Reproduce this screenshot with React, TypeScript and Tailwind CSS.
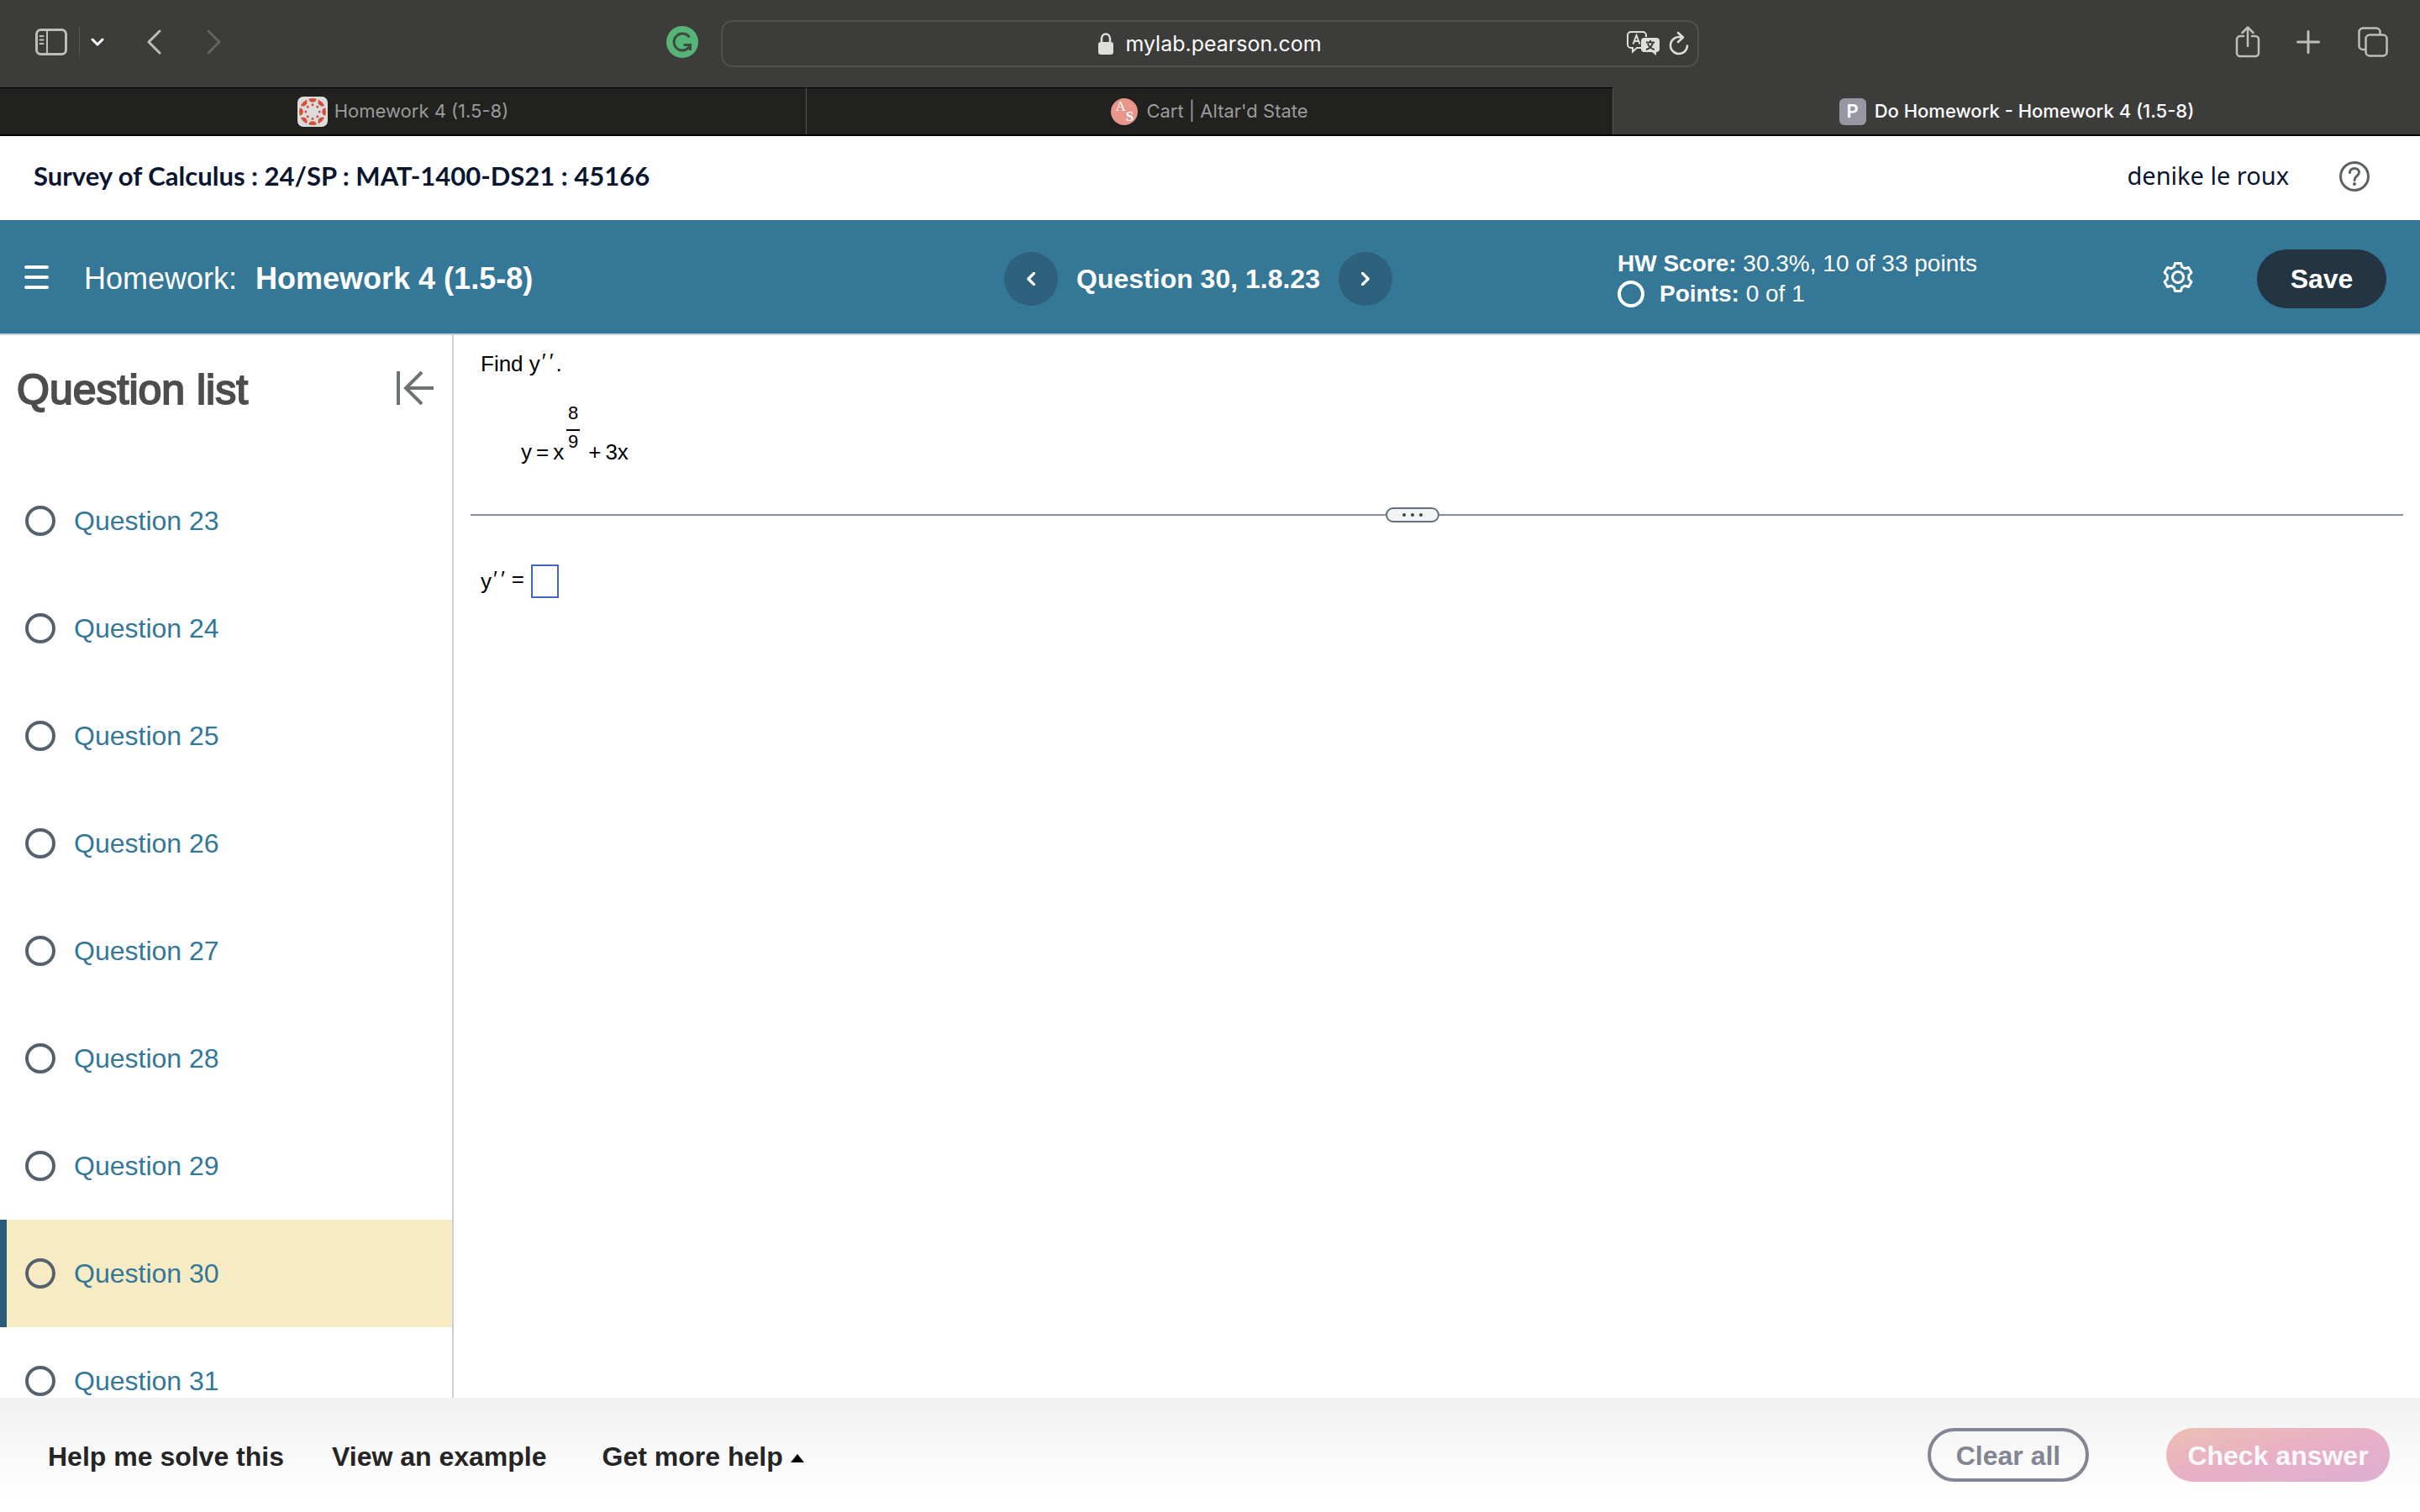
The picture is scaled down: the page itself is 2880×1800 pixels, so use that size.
import { useState } from "react";

const QUESTIONS = [23, 24, 25, 26, 27, 28, 29, 30, 31];

function SidebarIcon() {
  return (
    <svg width="38" height="32" viewBox="0 0 38 32" fill="none" stroke="currentColor" strokeWidth="3">
      <rect x="1.5" y="1.5" width="35" height="29" rx="5" />
      <path d="M14 2v28" strokeWidth="2" />
      <path d="M5.5 9h4M5.5 13.500h4M5.5 18h4" strokeWidth="2" strokeLinecap="round" />
    </svg>
  );
}

function Chevron({ left = false, className = "" }: { left?: boolean; className?: string }) {
  return (
    <svg
      className={className}
      viewBox="0 0 18 30"
      fill="none"
      stroke="currentColor"
      strokeWidth="3"
      strokeLinecap="round"
      strokeLinejoin="round"
    >
      <path d={left ? "M16 2 3 15l13 13" : "M2 2l13 13L2 28"} />
    </svg>
  );
}

function GrammarlyIcon() {
  return (
    <svg width="38" height="38" viewBox="0 0 38 38">
      <circle cx="19" cy="19" r="19" fill="#56b576" />
      <path
        d="M27.500 13.500A10 10 0 1 0 28.500 22.500H20.500M28.500 21v8"
        fill="none"
        stroke="#3c4a3f"
        strokeWidth="3"
      />
    </svg>
  );
}

function LockIcon() {
  return (
    <svg width="18" height="26" viewBox="0 0 18 26">
      <rect y="11" width="18" height="15" rx="3" fill="#dededd" />
      <path d="M4 12V7a5 5.500 0 0 1 10 0v5" fill="none" stroke="#dededd" strokeWidth="2.500" />
    </svg>
  );
}

function TranslateIcon() {
  return (
    <svg width="40" height="30" viewBox="0 0 40 30" fill="none" stroke="#dededd" strokeWidth="2">
      <path d="M17 20h-5l-5 4.500V20H5a4 4 0 0 1-4-4V5a4 4 0 0 1 4-4h14a4 4 0 0 1 4 4v2" />
      <path d="M7.500 15.500 11.500 5l4 10.500M9 12h5" />
      <path d="M21 8h14a4 4 0 0 1 4 4v9a4 4 0 0 1-4 4v4l-5-4h-9a4 4 0 0 1-4-4v-9a4 4 0 0 1 4-4z" fill="#dededd" stroke="none" />
      <path d="M23 13.500h10M28 11v2.500M31 14c-1 4-4 7-8 8M25 15c1 3 4 6 8 7" stroke="#3c3c3a" />
    </svg>
  );
}

function ReloadIcon() {
  return (
    <svg width="24" height="30" viewBox="0 0 24 30" fill="none" stroke="#dededd" strokeWidth="2.500" strokeLinecap="round">
      <path d="M15 7.500A10 10 0 1 0 22 17.500" />
      <path d="M11 2l6 5.500-6 5.500" strokeLinejoin="round" />
    </svg>
  );
}

function ShareIcon() {
  return (
    <svg width="30" height="38" viewBox="0 0 30 38" fill="none" stroke="currentColor" strokeWidth="2.500" strokeLinecap="round">
      <path d="M10 12H6a4 4 0 0 0-4 4v16a4 4 0 0 0 4 4h18a4 4 0 0 0 4-4V16a4 4 0 0 0-4-4h-4" />
      <path d="M15 24V2M8.500 8 15 1.500 21.500 8" strokeLinejoin="round" />
    </svg>
  );
}

function PlusIcon() {
  return (
    <svg width="28" height="28" viewBox="0 0 28 28" stroke="currentColor" strokeWidth="3" strokeLinecap="round">
      <path d="M14 1.500v25M1.500 14h25" />
    </svg>
  );
}

function TabsIcon() {
  return (
    <svg width="36" height="36" viewBox="0 0 36 36" fill="none" stroke="currentColor" strokeWidth="2.500">
      <rect x="9.500" y="9.500" width="25" height="25" rx="4.500" />
      <path d="M9 27H6a4.500 4.500 0 0 1-4.500-4.500V6A4.500 4.500 0 0 1 6 1.500h16A4.500 4.500 0 0 1 26.500 6v3" />
    </svg>
  );
}

function CanvasIcon() {
  const angles = [0, 45, 90, 135, 180, 225, 270, 315];
  return (
    <svg width="36" height="36" viewBox="0 0 36 36">
      <rect width="36" height="36" rx="7" fill="#dcdcdc" />
      {angles.map((angle) => (
        <g key={angle} transform={`rotate(${angle} 18 18)`} fill="#d5503b">
          <path d="M13.200 2.800a16 16 0 0 1 9.600 0a4.900 4.900 0 0 1-9.600 0z" />
          <circle cx="18" cy="9.800" r="1.500" />
        </g>
      ))}
    </svg>
  );
}

function AltarIcon() {
  return (
    <span className="flex size-8 items-center justify-center rounded-full bg-[#e8958b] font-['Liberation_Serif',serif] text-[17px] leading-4 text-white">
      <span className="pb-3">A</span>
      <span className="pt-3 font-bold">S</span>
    </span>
  );
}

function HelpIcon() {
  return (
    <svg width="36" height="36" viewBox="0 0 36 36" fill="none" stroke="#5c6260" strokeWidth="3">
      <circle cx="18" cy="18" r="16.500" />
      <path d="M12.500 13.500c0-3 2.200-5 5.500-5s5.500 2 5.500 4.700c0 4.300-5.500 4.300-5.500 9.300" strokeLinecap="round" />
      <circle cx="18" cy="27" r="2" fill="#5c6260" stroke="none" />
    </svg>
  );
}

function GearIcon() {
  return (
    <svg width="36" height="36" viewBox="0 0 36 36" fill="none" stroke="currentColor" strokeWidth="3" strokeLinejoin="round">
      <path d="M14.500 1.500h7l1.200 4.300 3.400 2 4.400-1.300 3.500 6-3.200 3.300v4.400l3.200 3.300-3.500 6-4.400-1.300-3.400 2-1.200 4.300h-7l-1.200-4.300-3.400-2-4.400 1.300-3.500-6 3.200-3.300v-4.400L2 12.500l3.500-6 4.400 1.300 3.400-2z" />
      <circle cx="18" cy="18" r="6.500" />
    </svg>
  );
}

function CollapseIcon() {
  return (
    <svg width="44" height="40" viewBox="0 0 44 40" fill="none" stroke="#6a7371" strokeWidth="4">
      <path d="M2 0v40M44 20H12M30 1 11 20l19 19" />
    </svg>
  );
}

function BrowserBar() {
  return (
    <div className="grid h-[104px] grid-cols-[1fr_1164px_1fr] items-center bg-[#3c3c3a] pb-1 text-[#bdbdbb]">
      <div className="flex items-center">
        <button aria-label="Show sidebar" className="ml-[42px]"><SidebarIcon /></button>
        <span className="ml-[14px] h-9 w-px bg-[#555553]" />
        <button aria-label="Tab groups" className="ml-[13px] text-white">
          <svg width="16" height="12" viewBox="0 0 16 12" fill="none" stroke="currentColor" strokeWidth="3" strokeLinecap="round" strokeLinejoin="round">
            <path d="M2 3l6 6 6-6" />
          </svg>
        </button>
        <button aria-label="Back" className="ml-[50px]"><Chevron left className="h-[30px] w-[18px]" /></button>
        <button aria-label="Forward" className="ml-[54px] text-[#646462]"><Chevron className="h-[30px] w-[18px]" /></button>
        <button aria-label="Grammarly" className="mr-[27px] ml-auto"><GrammarlyIcon /></button>
      </div>
      <div className="mt-1 flex h-14 items-center rounded-[14px] border-2 border-[#51514f] pr-[10px]">
        <div className="flex flex-1 items-center justify-center gap-[14px] pl-[84px] text-[25px] text-white">
          <LockIcon />
          <span className="pt-[2px]">mylab.pearson.com</span>
        </div>
        <button aria-label="Translate"><TranslateIcon /></button>
        <button aria-label="Reload" className="ml-[10px]"><ReloadIcon /></button>
      </div>
      <div className="flex items-center justify-end pr-[38px]">
        <button aria-label="Share"><ShareIcon /></button>
        <button aria-label="New tab" className="ml-[43px]"><PlusIcon /></button>
        <button aria-label="Tab overview" className="ml-[45px]"><TabsIcon /></button>
      </div>
    </div>
  );
}

function BrowserTabs() {
  return (
    <div className="grid h-[58px] grid-cols-3 border-b-2 border-black bg-[#212120] text-[22px] text-[#9b9b99]">
      <button className="flex items-center justify-center gap-2 border-t border-r border-t-black border-r-[#555553]">
        <CanvasIcon />
        Homework 4 (1.5-8)
      </button>
      <button className="flex items-center justify-center gap-[10px] border-t border-r border-t-black border-r-[#555553]">
        <AltarIcon />
        Cart | Altar'd State
      </button>
      <button className="flex items-center justify-center gap-[10px] bg-[#3c3c3a] pt-px font-medium text-white">
        <span className="flex size-8 items-center justify-center rounded-md bg-[#9796a3] font-semibold">P</span>
        Do Homework - Homework 4 (1.5-8)
      </button>
    </div>
  );
}

function CourseHeader() {
  return (
    <header className="flex h-[100px] items-center justify-between pr-[60px] pb-1 pl-10 text-[#0a1530]">
      <h1 className="pb-[2px] font-['Lato'] text-[31px] font-bold">Survey of Calculus : 24/SP : MAT-1400-DS21 : 45166</h1>
      <div className="flex items-center gap-[60px]">
        <span className="pb-[2px] font-['Noto_Sans'] text-[29px]">denike le roux</span>
        <button aria-label="Help"><HelpIcon /></button>
      </div>
    </header>
  );
}

function AssignmentBar() {
  return (
    <div className="grid h-[137px] grid-cols-[1fr_462px_1fr] items-center border-b-2 border-[#c9d0dc] bg-[#347796] pt-1 pr-7 text-white">
      <div className="flex items-center pl-[29px]">
        <button aria-label="Menu" className="flex w-[29px] flex-col gap-2 pb-1">
          <span className="h-1 w-full rounded-full bg-white" />
          <span className="h-1 w-full rounded-full bg-white" />
          <span className="h-1 w-full rounded-full bg-white" />
        </button>
        <h2 className="ml-[42px] flex gap-[22px] text-[36px]">
          Homework: <b>Homework 4 (1.5-8)</b>
        </h2>
      </div>
      <div className="flex items-center justify-between">
        <button aria-label="Previous question" className="flex size-16 items-center justify-center rounded-full bg-[#2d617c]">
          <Chevron left className="h-4 w-[10px] stroke-6" />
        </button>
        <h2 className="text-[32px] font-bold">Question 30, 1.8.23</h2>
        <button aria-label="Next question" className="flex size-16 items-center justify-center rounded-full bg-[#2d617c]">
          <Chevron className="h-4 w-[10px] stroke-6" />
        </button>
      </div>
      <div className="flex items-center justify-end pr-3">
        <div className="mr-auto pl-[268px] text-[28px] leading-9">
          <p><b>HW Score:</b> 30.3%, 10 of 33 points</p>
          <p className="flex items-center gap-[18px]">
            <span className="size-8 rounded-full border-4 border-white" />
            <span><b>Points:</b> 0 of 1</span>
          </p>
        </div>
        <button aria-label="Settings" className="mr-[76px] pb-1"><GearIcon /></button>
        <button className="h-[70px] w-[154px] rounded-full bg-[#233443] text-[32px] font-bold">Save</button>
      </div>
    </div>
  );
}

function QuestionList() {
  const [current, setCurrent] = useState(30);

  return (
    <aside className="w-[540px] shrink-0 overflow-hidden border-r-2 border-[#c9d0dc]">
      <div className="flex h-[157px] items-start justify-between pt-[30px] pr-[22px] pl-5">
        <h2 className="text-[50px] leading-[70px] text-[#4d4d4d] [-webkit-text-stroke:2px_#4d4d4d]">Question list</h2>
        <button aria-label="Collapse question list" className="pt-[13px]"><CollapseIcon /></button>
      </div>
      <ul>
        {QUESTIONS.map((number) => (
          <li key={number}>
            <a
              href={`#question-${number}`}
              onClick={() => setCurrent(number)}
              className={
                number === current
                  ? "flex h-32 items-center gap-[22px] border-l-8 border-[#295d77] bg-[#f7ebc4] pl-[22px] text-[32px] text-[#337799]"
                  : "flex h-32 items-center gap-[22px] border-l-8 border-transparent pl-[22px] text-[32px] text-[#337799]"
              }
            >
              <span className="size-9 rounded-full border-4 border-[#56616e]" />
              Question {number}
            </a>
          </li>
        ))}
      </ul>
    </aside>
  );
}

function DoublePrime() {
  return (
    <span className="mr-[3px] ml-[2px] inline-flex gap-1 align-[3px]">
      <span>′</span>
      <span>′</span>
    </span>
  );
}

function Exercise() {
  const [answer, setAnswer] = useState("");

  return (
    <main className="flex-1 px-5 text-[26px] leading-[30px] text-black">
      <div className="h-[205px] pt-4 pl-3">
        <p>
          Find y<DoublePrime />.
        </p>
        <div className="mt-[33px] flex items-end pl-12">
          <span className="flex gap-[5px]">
            <span>y</span>
            <span>=</span>
            <span>x</span>
          </span>
          <span className="mb-[14px] ml-[3px] flex w-4 flex-col text-center text-[22px] leading-[26px]">
            <span className="border-b-2 border-black pb-2 leading-[22px]">8</span>
            <span>9</span>
          </span>
          <span className="ml-[10px] flex gap-[5px]">
            <span>+</span>
            <span>3x</span>
          </span>
        </div>
      </div>
      <div className="flex items-center">
        <span className="h-[2px] flex-[19] bg-[#868fa0]" />
        <button
          aria-label="Resize panels"
          className="flex h-[18px] w-16 items-center justify-center gap-[6px] rounded-full border-2 border-[#636f7e] bg-[#f2f4f5]"
        >
          <span className="size-1 rounded-full bg-[#444]" />
          <span className="size-1 rounded-full bg-[#444]" />
          <span className="size-1 rounded-full bg-[#444]" />
        </button>
        <span className="h-[2px] flex-[20] bg-[#868fa0]" />
      </div>
      <div className="mt-[50px] flex items-center gap-2 pl-3">
        <label htmlFor="answer" className="flex gap-[5px] pb-[3px]">
          <span>y<DoublePrime /></span>
          <span>=</span>
        </label>
        <input
          id="answer"
          value={answer}
          onChange={(e) => setAnswer(e.target.value)}
          className="h-10 w-[33px] border-2 border-[#4066c8] bg-white"
        />
      </div>
    </main>
  );
}

function Footer() {
  return (
    <footer className="flex h-[136px] items-center bg-linear-to-b from-[#f1f1f1] to-white to-90% pr-9 pl-[57px] text-[32px] font-bold text-[#252525]">
      <button className="pt-1">Help me solve this</button>
      <button className="ml-[57px] pt-1">View an example</button>
      <button className="ml-[66px] flex items-center gap-[9px] pt-1">
        Get more help
        <svg className="mt-1" width="16" height="10" viewBox="0 0 16 10" fill="#000"><path d="M8 0l8 10H0z" /></svg>
      </button>
      <button className="ml-auto h-16 w-48 rounded-full border-4 border-[#828693] pt-[2px] text-[#828693]">Clear all</button>
      <button className="ml-[92px] h-16 w-[266px] rounded-full bg-linear-to-br from-[#ecbfb2] via-[#e9afc6] to-[#dcafd2] pt-[2px] text-[#f9f9fb]">
        Check answer
      </button>
    </footer>
  );
}

export default function App() {
  return (
    <div className="flex h-screen flex-col bg-white font-['Liberation_Sans',sans-serif]">
      <div className="font-['Inter',sans-serif]">
        <BrowserBar />
        <BrowserTabs />
      </div>
      <CourseHeader />
      <AssignmentBar />
      <div className="flex min-h-0 flex-1">
        <QuestionList />
        <Exercise />
      </div>
      <Footer />
    </div>
  );
}
